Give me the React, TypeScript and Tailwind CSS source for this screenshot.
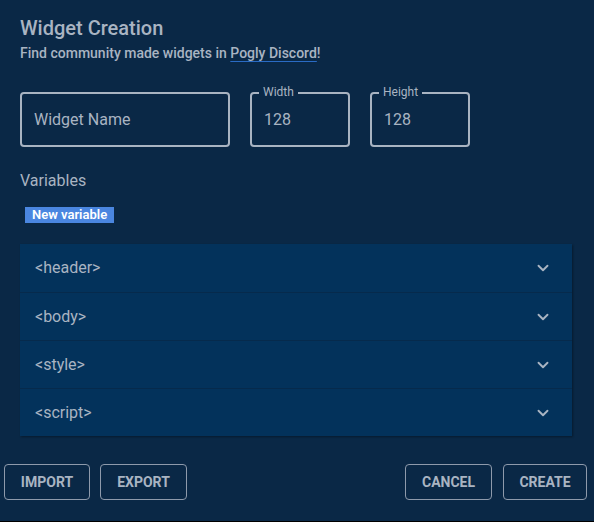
import React from 'react';
import { ChevronDown } from 'lucide-react';

const sections = ['<header>', '<body>', '<style>', '<script>'];

function Field({ label, value, className }: { label?: string; value: string; className: string }) {
  return (
    <div className={`relative h-[55px] rounded-[4px] border-2 border-[#a9b4c2] ${className}`}>
      {label && (
        <span className="absolute -top-[9px] left-[7px] px-[4px] bg-[#0a2846] text-[12px] leading-[14px] text-[#a9b4c2]">
          {label}
        </span>
      )}
      <div className="flex h-full items-center pl-[12px] text-[16px] text-[#a9b4c2]">{value}</div>
    </div>
  );
}

export default function App() {
  return (
    <div
      className="w-[594px] h-[522px] bg-[#0a2846] border-b border-black flex flex-col"
      style={{ fontFamily: 'Roboto, "Liberation Sans", sans-serif' }}
    >
      <div className="px-[20px] pt-[15px] flex-1">
        <h1 className="text-[20px] leading-[26px] font-medium text-[#a9b4c2]">Widget Creation</h1>
        <p className="mt-[2px] text-[14px] leading-[20px] font-medium text-[#a9b4c2]">
          Find community made widgets in{' '}
          <span className="underline decoration-[#2a6bc4] decoration-1 underline-offset-[3px]">Pogly Discord</span>!
        </p>

        <div className="mt-[29px] flex gap-[20px]">
          <Field value="Widget Name" className="w-[210px]" />
          <Field label="Width" value="128" className="w-[100px]" />
          <Field label="Height" value="128" className="w-[100px]" />
        </div>

        <div className="mt-[24px] text-[16px] leading-[20px] text-[#a9b4c2]">Variables</div>

        <div className="mt-[16px] ml-[5px] inline-block bg-[#4a86e0] px-[7px] text-[13px] leading-[16px] font-semibold text-white">
          New variable
        </div>

        <div className="mt-[18px] w-[552px] bg-[#03325b] shadow-[1px_1px_2px_rgba(0,0,0,0.35)]">
          {sections.map((s, i) => (
            <div
              key={s}
              className={`flex h-[48px] items-center justify-between pl-[15px] pr-[20px] text-[16px] text-[#a9b4c2] ${
                i > 0 ? 'border-t border-[#062a4c]' : ''
              }`}
            >
              <span>{s}</span>
              <ChevronDown size={18} strokeWidth={2.5} className="text-[#a9b4c2]" />
            </div>
          ))}
        </div>
      </div>

      <div className="flex justify-between px-[4px] pb-[21px]">
        <div className="flex gap-[10px]">
          <button className="h-[36px] w-[86px] rounded-[4px] border border-[#8e9aab] text-[14px] font-bold text-[#a9b4c2]">
            IMPORT
          </button>
          <button className="h-[36px] w-[87px] rounded-[4px] border border-[#8e9aab] text-[14px] font-bold text-[#a9b4c2]">
            EXPORT
          </button>
        </div>
        <div className="flex gap-[11px] pr-[3px]">
          <button className="h-[36px] w-[87px] rounded-[4px] border border-[#8e9aab] text-[14px] font-bold text-[#a9b4c2]">
            CANCEL
          </button>
          <button className="h-[36px] w-[84px] rounded-[4px] border border-[#8e9aab] text-[14px] font-bold text-[#a9b4c2]">
            CREATE
          </button>
        </div>
      </div>
    </div>
  );
}
